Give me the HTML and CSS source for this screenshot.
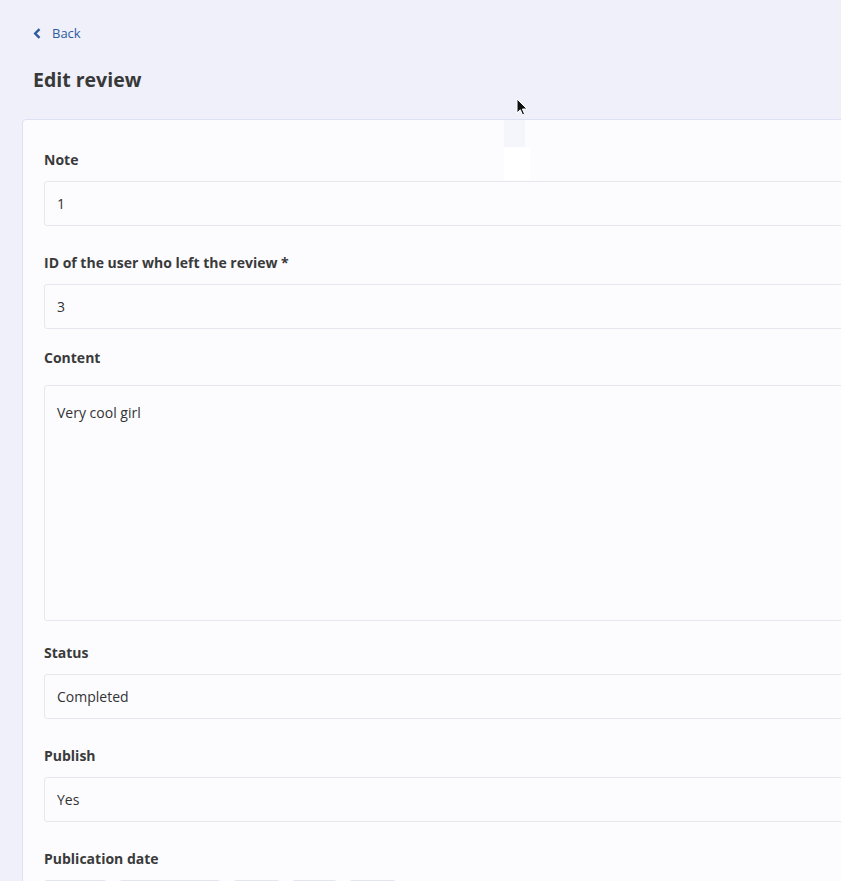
FILE: index.html
```html
<!DOCTYPE html>
<html lang="en">
<head>
<meta charset="utf-8">
<title>Edit review</title>
<link rel="stylesheet" href="styles.css">
</head>
<body>
<div class="page">
  <a class="back" href="#">
    <svg class="chev" width="8" height="11" viewBox="0 0 8 11"><path d="M6.5 1.2 L2.2 5.5 L6.5 9.8" fill="none" stroke="currentColor" stroke-width="2.4" stroke-linejoin="miter"/></svg>
    <span>Back</span>
  </a>
  <h1 class="title">Edit review</h1>
  <div class="card">
    <div class="field gap-27">
      <div class="label">Note</div>
      <div class="input">1</div>
    </div>
    <div class="field gap-19">
      <div class="label">ID of the user who left the review *</div>
      <div class="input">3</div>
    </div>
    <div class="field gap-22">
      <div class="label label-wide">Content</div>
      <div class="textarea">Very cool girl</div>
    </div>
    <div class="field gap-27">
      <div class="label">Status</div>
      <div class="input">Completed</div>
    </div>
    <div class="field gap-27">
      <div class="label">Publish</div>
      <div class="input">Yes</div>
    </div>
    <div class="field">
      <div class="label">Publication date</div>
      <div class="date-row">
        <div class="date-box w63"></div>
        <div class="date-box w102"></div>
        <div class="date-box w47"></div>
        <div class="date-box w45"></div>
        <div class="date-box w47"></div>
      </div>
    </div>
  </div>
</div>
<div class="ghost ghost-top"></div>
<div class="ghost ghost-bottom"></div>
<svg class="cursor" width="12" height="19" viewBox="0 0 12 19"><path d="M1 1 L1 15 L4.3 11.8 L6.6 17 L8.6 16.1 L6.4 11 L11 11 Z" fill="#111" stroke="#fff" stroke-width="1"/></svg>
</body>
</html>
```

FILE: styles.css
```css
html, body {
  margin: 0;
  padding: 0;
}
body {
  background: #eff0fa;
  font-family: "Open Sans", "Noto Sans", sans-serif;
  color: #333;
  overflow: hidden;
  width: 841px;
  height: 881px;
  position: relative;
}
.page {
  padding: 24px 0 0 22px;
}
.back {
  display: flex;
  align-items: center;
  gap: 11px;
  margin-left: 11px;
  height: 18px;
  color: #2e5b9a;
  text-decoration: none;
  font-size: 13px;
  line-height: 18px;
}
.chev {
  display: block;
  margin-top: 1px;
}
.title {
  margin: 25px 0 0 11px;
  font-size: 19.5px;
  line-height: 26px;
  font-weight: 700;
  color: #383838;
}
.card {
  margin-top: 26px;
  width: 900px;
  box-sizing: border-box;
  background: #fcfcff;
  border: 1px solid #dde1f4;
  border-radius: 4px;
  padding: 30px 0 0 21px;
  height: 800px;
}
.field.gap-27 { margin-bottom: 27px; }
.field.gap-19 { margin-bottom: 19px; }
.field.gap-22 { margin-bottom: 22px; }
.label {
  font-size: 14px;
  line-height: 20px;
  font-weight: 700;
  color: #3a3a3a;
  margin-bottom: 11px;
}
.label-wide { margin-bottom: 17px; }
.input {
  height: 43px;
  border: 1px solid #e6e7ef;
  border-radius: 3px;
  background: #fcfcff;
  padding: 0 12px;
  font-size: 14px;
  line-height: 43px;
  color: #333;
}
.textarea {
  border: 1px solid #e6e7ef;
  border-radius: 3px;
  background: #fcfcff;
  padding: 17px 12px 0;
  box-sizing: border-box;
  height: 236px;
  font-size: 14px;
  line-height: 20px;
  color: #333;
}
.date-row {
  display: flex;
  gap: 12px;
  margin-top: 1px;
}
.date-box {
  height: 40px;
  border: 1px solid #e2e4ee;
  border-radius: 3px;
  box-sizing: border-box;
}
.w63 { width: 63px; }
.w102 { width: 102px; }
.w47 { width: 47px; }
.w45 { width: 45px; }
.ghost {
  position: absolute;
  left: 504px;
  width: 21px;
}
.ghost-top {
  top: 120px;
  height: 27px;
  background: #f5f6fc;
}
.ghost-bottom {
  top: 147px;
  height: 33px;
  width: 26px;
  background: #ffffff;
}
.cursor {
  position: absolute;
  left: 516px;
  top: 98px;
}
```
